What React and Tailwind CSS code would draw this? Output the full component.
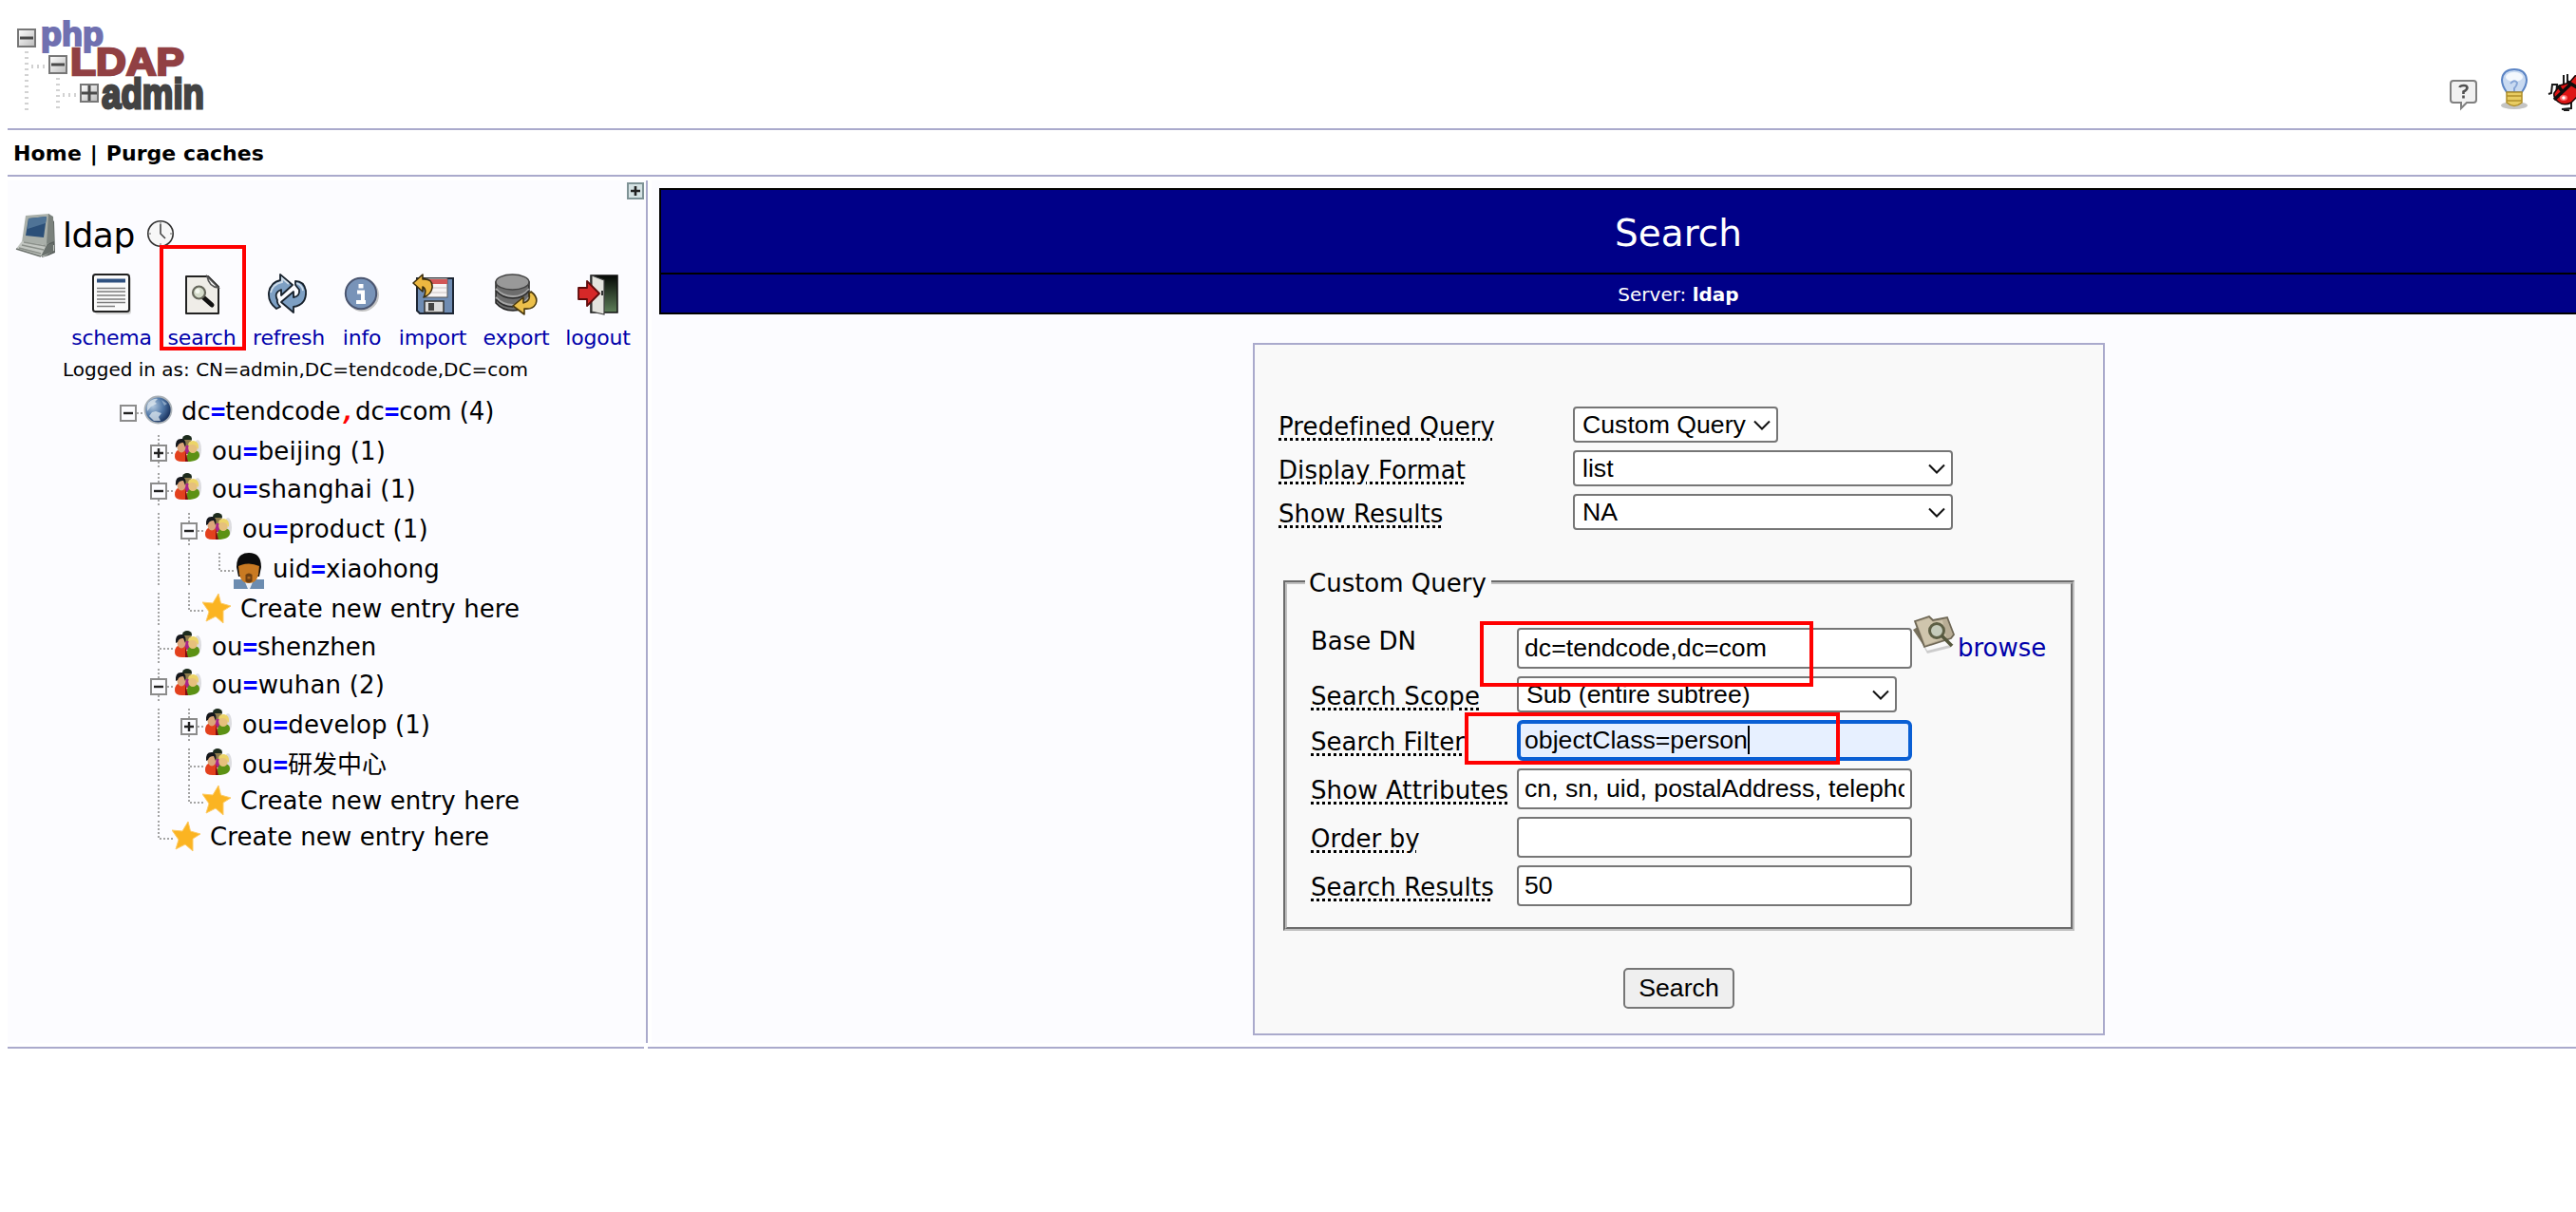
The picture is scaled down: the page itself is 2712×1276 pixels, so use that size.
const Logo = () => (
  <svg width="210" height="100" viewBox="0 0 210 100" className="block overflow-visible">
    <defs>
      <linearGradient id="lg" x1="0" y1="0" x2="1" y2="1">
        <stop offset="0" stopColor="#fff" />
        <stop offset="1" stopColor="#bbb" />
      </linearGradient>
    </defs>
    <g stroke="#d2d2d2" strokeWidth="4" strokeDasharray="2 4" fill="none">
      <path d="M12 34V98M45 62V98" />
      <path d="M17 50H34M50 80H66" />
    </g>
    <g fontFamily="Liberation Sans" fontWeight="700">
      <text x="27" y="28" fontSize="35" textLength="66" lengthAdjust="spacingAndGlyphs" fill="#7070b0" stroke="#7070b0" strokeWidth="2">php</text>
      <text x="58" y="59" fontSize="40" textLength="120" lengthAdjust="spacingAndGlyphs" fill="#914043" stroke="#914043" strokeWidth="2.400">LDAP</text>
      <text x="91" y="94" fontSize="45" textLength="108" lengthAdjust="spacingAndGlyphs" fill="#434343" stroke="#434343" strokeWidth="2.800">admin</text>
    </g>
    <g fill="url(#lg)" stroke="#777" strokeWidth="2">
      <rect x="3" y="11" width="18" height="18" />
      <rect x="36" y="39" width="18" height="18" />
      <rect x="69" y="69" width="18" height="18" />
    </g>
    <path d="M5 20H19M38 48H52M70 78H86M78 70V86" stroke="#4a4a4a" strokeWidth="3" />
  </svg>
);

const Question = () => (
  <svg width="32" height="34" viewBox="0 0 32 34">
    <path d="M4 2H25Q28 2 28 5V22Q28 25 25 25H18L12 31V25H4Q1 25 1 22V5Q1 2 4 2Z" fill="#f1f1f1" stroke="#808080" strokeWidth="2" />
    <path d="M10.500 9Q11 7 15 7Q18.500 7 18.500 9.500Q18 12 14.500 13.500V16M14.500 17.500V20.500" fill="none" stroke="#505050" strokeWidth="2.600" />
  </svg>
);

const Bulb = () => (
  <svg width="36" height="46" viewBox="0 0 36 46">
    <ellipse cx="18" cy="40" rx="14" ry="4" fill="#c4c4c4" />
    <path d="M10 26Q5 19 5 13Q6 2 18 2Q30 2 31 13Q31 19 26 26Z" fill="#c9daf1" stroke="#5b84c4" strokeWidth="2" />
    <ellipse cx="18" cy="10" rx="9" ry="5" fill="#f4f8fd" />
    <path d="M14 17Q18 12 21 16Q21 19 18 22V25" fill="none" stroke="#86a5d6" strokeWidth="2" />
    <path d="M10 26H26V37Q18 44 10 37Z" fill="#e8cc62" stroke="#b08f2a" strokeWidth="1.5" />
    <path d="M10 30H26M10 35H26" stroke="#b08f2a" strokeWidth="1.5" />
  </svg>
);

const Bug = () => (
  <svg width="31" height="46" viewBox="0 0 31 46">
    <path d="M10 22L11 11H6L5 20L2 21M18 14V1M22 12V0M16 37L26 36V30M18 38H24" fill="none" stroke="#1a1a1a" strokeWidth="2" />
    <path d="M8 20L14 12L24 9L30 2L34 1V22L26 30Q18 34 12 29Q7 25 8 20Z" fill="#dd1515" stroke="#1a0505" strokeWidth="1.500" />
    <path d="M8 27L26 10M12 12L17 19M22 8L32 14" stroke="#0d0d0d" strokeWidth="3.500" fill="none" />
    <ellipse cx="18" cy="25" rx="4" ry="3" fill="#ff6a6a" />
    <circle cx="18" cy="25" r="1.800" fill="#fff" />
  </svg>
);

const Computer = () => (
  <svg width="44" height="50" viewBox="0 0 44 50">
    <path d="M36 6L41 9L42 42L35 45L28 47L30 30Z" fill="#59605d" />
    <path d="M11 3L36 1L38 30L33 34L7 31Z" fill="#a9afa9" />
    <path d="M35 1L40 4L41 30L33 33Z" fill="#7b827d" />
    <path d="M14 6L33 4L30 26L11 24Z" fill="#2b4f78" />
    <path d="M14 6L33 4L32 11L13 17Z" fill="#4f7396" />
    <path d="M7 30L33 34L41 34L41 40L30 46L26 46L1 38Z" fill="#c3c7c2" />
    <path d="M9 31L32 35M7 34L30 39M4 37L27 43" stroke="#8b908a" strokeWidth="1.500" />
    <path d="M33 34L27 46L40 41V32Z" fill="#69706c" />
    <path d="M1 38L27 46" stroke="#6d736e" strokeWidth="1.500" />
  </svg>
);

const Clock = () => (
  <svg width="30" height="30" viewBox="0 0 30 30">
    <circle cx="15" cy="15" r="13.200" fill="#f7f7f7" stroke="#333" strokeWidth="1.600" />
    <path d="M15 5V15L20 20" fill="none" stroke="#444" strokeWidth="1.600" />
    <path d="M15 3V5M15 25V27M3 15H5M25 15H27" stroke="#999" strokeWidth="1.500" />
  </svg>
);

const Schema = () => (
  <svg width="44" height="44" viewBox="0 0 44 44">
    <rect x="4" y="3" width="38" height="40" rx="3" fill="#d5d5d5" />
    <rect x="2" y="1" width="38" height="39" rx="2.500" fill="#fafafa" stroke="#222" strokeWidth="2" />
    <rect x="6" y="5.500" width="30" height="4" fill="#2f5180" />
    <path d="M6 15.500H36M6 19H36M6 23H36M6 27H36M6 30.500H36M6 34.500H25" stroke="#7c7c7c" strokeWidth="1.600" />
  </svg>
);

const SearchIcon = () => (
  <svg width="44" height="44" viewBox="0 0 44 44">
    <path d="M5 3H28L39 14V42H5Z" fill="#efede8" stroke="#222" strokeWidth="2" strokeLinejoin="round" />
    <path d="M27 3Q29 14 39 15Z" fill="#fff" stroke="#555" strokeWidth="1.500" />
    <path d="M23 25L32 33" stroke="#111" strokeWidth="5" strokeLinecap="round" />
    <circle cx="18.500" cy="20" r="6.500" fill="#d5dccb" stroke="#66675c" strokeWidth="2.200" />
    <circle cx="17" cy="18.500" r="2.500" fill="#f4f7f0" />
  </svg>
);

const Refresh = () => (
  <svg width="44" height="44" viewBox="0 0 44 44">
    <g stroke="#17212c" strokeWidth="1.800" strokeLinejoin="round">
      <path d="M9 37Q0 30 1 20Q3 9 13 7V1L26 12L14 23V17Q6 20 10 28Q9 31 13 35Z" fill="#7d9fc3" />
      <path d="M29 8Q38 8 40 18Q41 33 27 35V41L14 30L27 19V25Q34 24 33 17L29 12Z" fill="#7d9fc3" />
    </g>
    <path d="M3 20Q5 11 15 9V5L22 11M30 10Q36 12 37 18" fill="none" stroke="#cfdce9" strokeWidth="1.800" />
  </svg>
);

const Info = () => (
  <svg width="44" height="44" viewBox="0 0 44 44">
    <circle cx="22.500" cy="22.500" r="17.500" fill="#c4c4c4" />
    <circle cx="21" cy="21" r="16.200" fill="#7893b8" stroke="#4a5570" strokeWidth="2" />
    <path d="M17 19.500H23V29M16 30H26" stroke="#fff" strokeWidth="4" fill="none" />
    <rect x="18.500" y="11" width="5" height="4.500" fill="#fff" />
  </svg>
);

const Import = () => (
  <svg width="44" height="44" viewBox="0 0 44 44">
    <path d="M5 5H43V42H8L5 39Z" fill="#6f8cb3" stroke="#1d2634" strokeWidth="2" />
    <rect x="14" y="5" width="23" height="20" fill="#f7f4f4" stroke="#555" strokeWidth="1" />
    <rect x="14" y="6" width="23" height="5" fill="#d25656" />
    <path d="M16 15H36M16 20H36" stroke="#d9d2d2" strokeWidth="1.500" />
    <rect x="13" y="29" width="20" height="12" fill="#dcdcdc" stroke="#333" strokeWidth="1.500" />
    <rect x="17" y="31" width="6" height="8" fill="#444" />
    <path d="M1 10L11 1V6Q22 5 21 15Q20 22 12 25Q16 17 11 14V19Z" fill="#ecb740" stroke="#3c2e0c" strokeWidth="1.600" strokeLinejoin="round" />
  </svg>
);

const Export = () => (
  <svg width="46" height="44" viewBox="0 0 46 44">
    <path d="M1 9V31Q8 39 19 39Q30 39 36 31V9Z" fill="#6d6d6d" stroke="#222" strokeWidth="1.5" />
    <path d="M1 16Q8 24 19 24Q30 24 36 16M1 25Q8 33 19 33Q30 33 36 25" fill="none" stroke="#a5a5a5" strokeWidth="2" />
    <path d="M1 18Q8 26 19 26Q30 26 36 18M1 27Q8 35 19 35" fill="none" stroke="#2d2d2d" strokeWidth="1.5" />
    <ellipse cx="18.500" cy="9" rx="17.500" ry="8" fill="#999" stroke="#444" strokeWidth="1.5" />
    <path d="M38 19Q46 25 43 32Q40 38 31 37V43L19 34L30 25V31Q38 29 36 21Z" fill="#ecc04b" stroke="#4a390e" strokeWidth="1.6" strokeLinejoin="round" />
  </svg>
);

const Logout = () => (
  <svg width="44" height="44" viewBox="0 0 44 44">
    <defs>
      <linearGradient id="dk" x1="0" y1="0" x2="0" y2="1">
        <stop offset="0" stopColor="#050805" />
        <stop offset="1" stopColor="#5e7f59" />
      </linearGradient>
    </defs>
    <rect x="14" y="2" width="28" height="39" fill="url(#dk)" stroke="#111" strokeWidth="1.5" />
    <path d="M15 2L28 7V43L15 40Z" fill="#e4e4de" stroke="#444" strokeWidth="1.2" />
    <path d="M26 18V23" stroke="#333" strokeWidth="2" />
    <path d="M1 15H10V8L23 21L10 34V27H1Z" fill="#d62828" stroke="#5e0b0b" strokeWidth="1.8" strokeLinejoin="round" />
  </svg>
);

const Globe = () => (
  <svg width="32" height="34" viewBox="0 0 32 34">
    <defs>
      <radialGradient id="gb" cx=".3" cy=".35" r=".8">
        <stop offset="0" stopColor="#b3c9df" />
        <stop offset=".5" stopColor="#4f76a6" />
        <stop offset=".85" stopColor="#1d3763" />
        <stop offset="1" stopColor="#14264a" />
      </radialGradient>
    </defs>
    <circle cx="15.500" cy="15.500" r="14" fill="url(#gb)" stroke="#a9b0b6" strokeWidth="1.800" />
    <path d="M5 8Q11 3 15 4L12 7L14 9L8 12L4 17Q3 12 5 8ZM13 17L19 19L16 23L18 27L11 27L6 22L9 18Z" fill="#dfe8ef" opacity=".75" />
    <path d="M19 5L25 9L22 11Z" fill="#b7cade" opacity=".6" />
  </svg>
);

const People = () => (
  <svg width="32" height="34" viewBox="0 0 32 34">
    <ellipse cx="25" cy="15" rx="4" ry="10" fill="#dcdce0" />
    <ellipse cx="14" cy="4" rx="5" ry="4" fill="#1d2b1d" />
    <path d="M9 8H20L18 20H11Z" fill="#a8258a" />
    <path d="M11 5H18V11H11Z" fill="#8f7c4e" />
    <path d="M1 23Q1 15 8 15Q14 15 15 28H9Q1 28 1 23Z" fill="#e3401d" />
    <path d="M14 26Q13 16 20 16Q27 16 27 21Q27 28 14 28Z" fill="#5c9114" />
    <path d="M12 17L15 28H12Z" fill="#7c0c12" />
    <ellipse cx="8" cy="12.500" rx="4.500" ry="6" fill="#dba67a" />
    <path d="M2 13Q1 3 9 4Q14 6 12 13L10 8Q5 8 4 12Z" fill="#15171c" />
    <ellipse cx="20" cy="13.500" rx="4.800" ry="5.500" fill="#e6c07c" />
    <path d="M15 11Q15 6 21 6Q27 7 26 15L23 11Q20 9 15 11Z" fill="#ecd468" />
  </svg>
);

const Person = () => (
  <svg width="32" height="38" viewBox="0 0 32 38" className="-ml-px mr-px">
    <path d="M0 38V28H32V38Z" fill="#6c8cb0" />
    <path d="M12 31H20L17 38H15Z" fill="#eef1f5" />
    <path d="M3 15Q3 0 16 0Q29 0 29 15L27 25H5Z" fill="#0c0c0c" />
    <path d="M5 14Q16 9 27 14L26 23Q24 32 16 32Q8 32 6 23Z" fill="#c97a22" />
    <path d="M12.500 23Q16 20 19.500 23V30Q16 33 12.500 30Z" fill="#6d3f12" />
    <rect x="14.500" y="25" width="3" height="2.500" fill="#b06a20" />
  </svg>
);

const Star = () => (
  <svg width="32" height="34" viewBox="0 0 32 34" className="-ml-0.5 mr-0.5">
    <path d="M17 1L19.500 11L30 14L22 19L22 32L14 25L4 30L7 20L0 10L11 11Z" fill="#fbb422" stroke="#fdcb66" strokeWidth="1" strokeLinejoin="round" />
  </svg>
);

const Line = ({ d }) => (
  <path d={d} fill="none" stroke="#a4a4a4" strokeWidth="2" strokeDasharray="2 2" />
);

// Tree connector cells: v = vertical, t = tee, l = corner, + / - = toggles, r = root toggle
const Cell = ({ k }) => (
  <svg width="32" height="34" viewBox="0 0 32 34" className="shrink-0">
    {(k === 'v' || k === 't' || k === '+' || k === '-') && <Line d="M16 0V34" />}
    {k === 'l' && <Line d="M16 0V19H32" />}
    {(k === 't' || k === '+' || k === '-' || k === 'r') && <Line d="M17 19H32" />}
    {(k === '+' || k === '-' || k === 'r') && (
      <>
        <rect x="8" y="11" width="16" height="16" fill="#fcfcff" stroke="#8c8c8c" strokeWidth="2" />
        <path d={k === '+' ? 'M11 19H21M16 14V24' : 'M11 19H21'} stroke="#222" strokeWidth="2.4" />
      </>
    )}
  </svg>
);

const Eq = () => <b className="font-['DejaVu_Sans_Mono',monospace] text-[#0000ff]">=</b>;

const ICONS = { people: People, person: Person, star: Star, globe: Globe };

const Row = ({ h, cells, icon, tx, children }) => {
  const I = ICONS[icon];
  return (
    <div className={`flex items-start ${h}`}>
      {cells.split('').map((c, i) => <Cell key={i} k={c} />)}
      <I />
      <div className={`whitespace-nowrap leading-[34px] ${tx}`}>{children}</div>
    </div>
  );
};

const Chevron = () => (
  <svg width="18" height="12" viewBox="0 0 18 12" className="absolute right-[6px] top-[12px]">
    <path d="M1 1.500L9 9.500L17 1.500" fill="none" stroke="#111" strokeWidth="2" />
  </svg>
);

const Select = ({ w, children }) => (
  <div className={`relative h-[38px] rounded-[4px] border-2 border-[#767676] bg-white pl-2 font-['Liberation_Sans',sans-serif] text-[26.670px] leading-[34px] ${w}`}>
    <span className="whitespace-nowrap">{children}</span>
    <Chevron />
  </div>
);

const Input = ({ focus, children }) => (
  <div className={focus
    ? "h-[43px] w-[416px] rounded-[6px] border-4 border-[#0a5fd4] bg-[#e7f0ff] px-1 font-['Liberation_Sans',sans-serif] text-[26.670px] leading-[34px]"
    : "h-[43px] w-[416px] rounded-[4px] border-2 border-[#767676] bg-white px-1.5 font-['Liberation_Sans',sans-serif] text-[26.670px] leading-[38px]"}>
    <div className="flex h-full overflow-hidden whitespace-nowrap">{children}</div>
  </div>
);

const Abbr = ({ children }) => (
  <span className="underline decoration-dotted decoration-[3px] underline-offset-[3px]">{children}</span>
);

const tools = [
  ['schema', 'w-[101px]', Schema],
  ['search', 'w-[89px]', SearchIcon],
  ['refresh', 'w-[94px]', Refresh],
  ['info', 'w-[60px]', Info],
  ['import', 'w-[89px]', Import],
  ['export', 'w-[87px]', Export],
  ['logout', 'w-[85px]', Logout],
];

export default function App() {
  return (
    <div className="relative h-[1276px] w-[2712px] overflow-hidden bg-white pl-2 font-['DejaVu_Sans','Noto_Sans_CJK_SC',sans-serif] text-[26px] text-black">
      <header className="flex h-[137px] justify-between border-b-2 border-[#aaaacc]">
        <div className="pl-2 pt-[20px]"><Logo /></div>
        <div className="flex items-start">
          <div className="mr-[18px] pt-[83px]"><Question /></div>
          <div className="mr-[16px] pt-[71px]"><Bulb /></div>
          <div className="pt-[78px]"><Bug /></div>
        </div>
      </header>
      <nav className="h-[49px] border-b-2 border-[#aaaacc] pl-1.5 text-[22px] font-bold leading-[49px] tracking-[0.150px]">
        Home <span className="ml-[1px]">|</span> <span className="ml-[1px] tracking-[0.050px]">Purge caches</span>
      </nav>

      <div className="mt-1 flex h-[908px]">
        <aside className="h-[908px] w-[674px] shrink-0 border-r-2 border-[#aaaacc] bg-[#fcfcff]">
          <div className="flex h-[18px] justify-end pr-0.5 pt-0.5">
            <svg width="18" height="18" viewBox="0 0 18 18" className="shrink-0">
              <rect x="1" y="1" width="16" height="16" fill="#d5e2e4" stroke="#7f9396" strokeWidth="2" />
              <path d="M4 9H14M9 4V14" stroke="#222" strokeWidth="2.600" />
            </svg>
          </div>
          <div className="flex h-[80px] items-start pl-2 pt-4">
            <Computer />
            <span className="ml-[6px] mt-[2px] text-[36px] leading-[44px] tracking-[-0.500px]">ldap</span>
            <span className="ml-[12px] mt-[7px]"><Clock /></span>
          </div>
          <div className="flex pl-[59px]">
            {tools.map(([t, w, I]) => (
              <div key={t} className={`flex flex-col items-center ${w}`}>
                <I />
                <span className="mt-[8px] text-[22px] leading-[32px] tracking-[-0.200px] text-[#0000aa]">{t}</span>
              </div>
            ))}
          </div>
          <div className="ml-[58px] h-[44px] whitespace-nowrap text-[20px] leading-[34px]">
            Logged in as: CN=admin,DC=tendcode,DC=com
          </div>
          <div className="pl-[111px]">
            <Row h="h-[42px]" cells="r" icon="globe" tx="ml-[8px] tracking-[-0.080px]">
              dc<Eq />tendcode<b className="font-['DejaVu_Sans_Mono'] italic text-[#ff0000]">,</b>dc<Eq />com (4)
            </Row>
            <div className="pl-8">
              <Row h="h-[40px]" cells="+" icon="people" tx="ml-[8px] tracking-[0.200px]">ou<Eq />beijing (1)</Row>
              <Row h="h-[42px]" cells="-" icon="people" tx="ml-[8px] tracking-[0.200px]">ou<Eq />shanghai (1)</Row>
              <Row h="h-[42px]" cells="v-" icon="people" tx="ml-[8px] tracking-[0.200px]">ou<Eq />product (1)</Row>
              <Row h="h-[42px]" cells="vvl" icon="person" tx="ml-[8px]">uid<Eq />xiaohong</Row>
              <Row h="h-[40px]" cells="vl" icon="star" tx="ml-[6px] tracking-[0.090px]">Create new entry here</Row>
              <Row h="h-[40px]" cells="t" icon="people" tx="ml-[8px]">ou<Eq />shenzhen</Row>
              <Row h="h-[42px]" cells="-" icon="people" tx="ml-[8px] tracking-[0.200px]">ou<Eq />wuhan (2)</Row>
              <Row h="h-[42px]" cells="v+" icon="people" tx="ml-[8px] tracking-[0.100px]">ou<Eq />develop (1)</Row>
              <Row h="h-[38px]" cells="vt" icon="people" tx="ml-[8px]">ou<Eq />研发中心</Row>
              <Row h="h-[38px]" cells="vl" icon="star" tx="ml-[6px] tracking-[0.090px]">Create new entry here</Row>
              <Row h="h-[38px]" cells="l" icon="star" tx="ml-[6px] tracking-[0.090px]">Create new entry here</Row>
            </div>
          </div>
        </aside>

        <main className="ml-1 h-[908px] w-[2160px] shrink-0 bg-[#fcfcff] pl-2 pt-2">
          <div className="w-[2146px] border-2 border-black bg-[#000088] text-center text-white">
            <div className="h-[89px] border-b-2 border-black text-[39px] leading-[91px]">Search</div>
            <div className="h-[40px] text-[20px] leading-[42px]">Server: <b>ldap</b></div>
          </div>
          <div className="ml-[625px] mt-[30px] h-[729px] w-[897px] border-2 border-[#aaaacc] bg-[#f9f9f9] pt-[65px]">
            <div className="flex flex-col gap-2 pl-[25px]">
              {[['Predefined Query', 'Custom Query', 'w-[216px]'], ['Display Format', 'list', 'w-[400px]'], ['Show Results', 'NA', 'w-[400px]']].map(([l, v, w]) => (
                <div key={l} className="flex h-[38px]">
                  <div className="w-[310px] leading-[42px] tracking-[0.100px]"><Abbr>{l}</Abbr></div>
                  <Select w={w}>{v}</Select>
                </div>
              ))}
            </div>
            <fieldset className="ml-[30px] mt-[38px] h-[384px] w-[833px] border-4 border-[#c0c0c0] pl-[25px] [border-style:groove]">
              <legend className="-ml-[6px] h-[34px] w-[196px] whitespace-nowrap pl-[4px] leading-[37px]">Custom Query</legend>
              <div className="mt-[31px] flex h-[43px]">
                <div className="w-[217px] leading-[28px]">Base DN</div>
                <Input>dc=tendcode,dc=com</Input>
                <svg width="48" height="44" viewBox="0 0 48 44" className="-mt-[14px] shrink-0">
                  <path d="M4 18L16 38L44 31L40 35L16 41Z" fill="#ccc" />
                  <path d="M1 16L13 34L15 20L6 13Z" fill="#77705c" />
                  <path d="M3 7L18 2L22 6L37 3L44 21L41 25L13 34Z" fill="#b9ae96" stroke="#6f6856" strokeWidth="1.800" />
                  <path d="M5 8L18 4L22 8L32 6L36 24L14 32Z" fill="#cfc5ad" />
                  <circle cx="26" cy="17" r="7.500" fill="#c5cbbb" stroke="#5d5f45" strokeWidth="3" />
                  <path d="M31 22L42 33" stroke="#55573d" strokeWidth="3.500" />
                </svg>
                <span className="leading-[42px] text-[#0000aa]">browse</span>
              </div>
              <div className="mt-[8px] flex h-[38px]">
                <div className="w-[217px] leading-[42px] tracking-[0.100px]"><Abbr>Search Scope</Abbr></div>
                <Select w="w-[400px]">Sub (entire subtree)</Select>
              </div>
              <div className="mt-[8px] flex h-[43px]">
                <div className="w-[217px] leading-[46px]"><Abbr>Search Filter</Abbr></div>
                <Input focus>
                  objectClass=person<span className="mt-[2px] h-[30px] w-[2px] bg-black" />
                </Input>
              </div>
              {[['Show Attributes', 'cn, sn, uid, postalAddress, telephoneNumber'], ['Order by', ''], ['Search Results', '50']].map(([l, v]) => (
                <div key={l} className="mt-[8px] flex h-[43px]">
                  <div className="w-[217px] whitespace-nowrap leading-[47px] tracking-[0.100px]"><Abbr>{l}</Abbr></div>
                  <Input>{v}</Input>
                </div>
              ))}
            </fieldset>
            <div className="mt-[39px] flex justify-center">
              <button className="h-[43px] w-[117px] rounded-[5px] border-2 border-[#767676] bg-[#efefef] font-['Liberation_Sans',sans-serif] text-[26.670px] leading-[38px]"><span className="block h-[39px]">Search</span></button>
            </div>
          </div>
        </main>
      </div>

      <div className="mt-1 flex">
        <div className="h-[2px] w-[670px] shrink-0 bg-[#aaaacc]" />
        <div className="ml-1 h-[2px] w-[2030px] shrink-0 bg-[#aaaacc]" />
      </div>

      <div className="absolute left-[168px] top-[258px] h-[111px] w-[91px] border-4 border-[#ff0000]" />
      <div className="absolute left-[1558px] top-[654px] h-[69px] w-[351px] border-4 border-[#ff0000]" />
      <div className="absolute left-[1542px] top-[750px] h-[55px] w-[395px] border-4 border-[#ff0000]" />
    </div>
  );
}
